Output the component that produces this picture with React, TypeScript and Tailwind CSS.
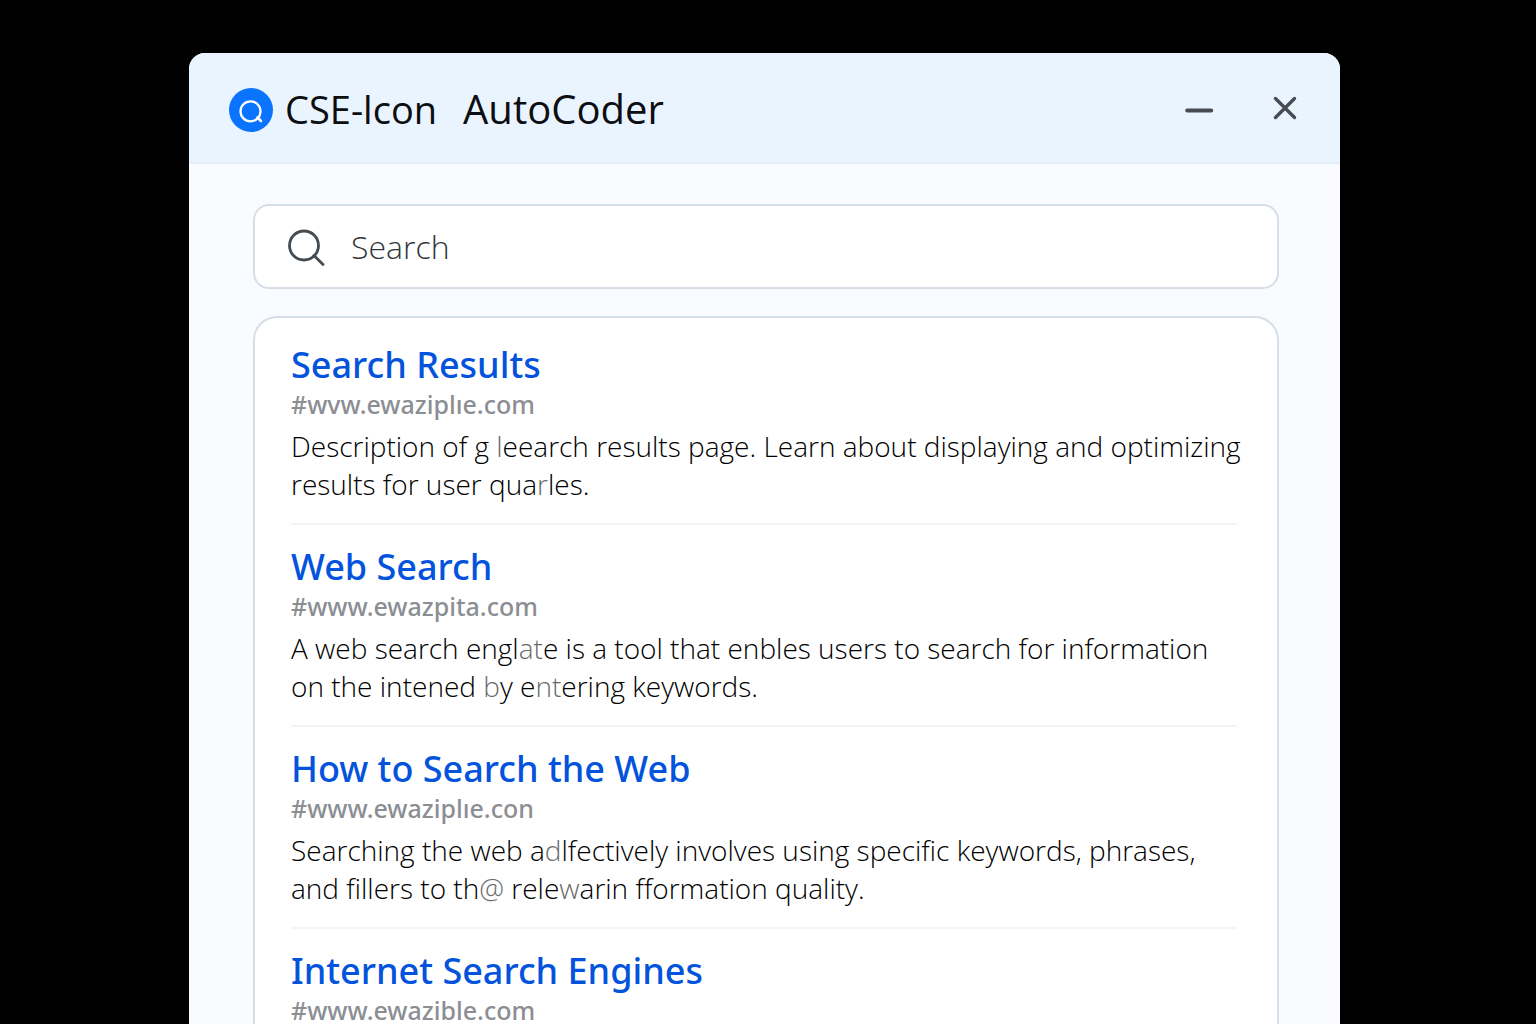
import type { ReactNode } from "react";

type Result = { title: string; url: string; lines?: ReactNode[] };

function Faded({ children }: { children: ReactNode }) {
  return <span className="text-[#6a6a6a]">{children}</span>;
}

const results: Result[] = [
  {
    title: "Search Results",
    url: "#wvw.ewaziplıe.com",
    lines: [
      <>Description of g <Faded>l</Faded>eearch results page. Learn about displaying and optimizing</>,
      <>results for user qua<Faded>r</Faded>les.</>,
    ],
  },
  {
    title: "Web Search",
    url: "#www.ewazpita.com",
    lines: [
      <>A web search engl<Faded>at</Faded>e is a tool that enbles users to search for information</>,
      <>on the intened <Faded>b</Faded>y e<Faded>nt</Faded>ering keywords.</>,
    ],
  },
  {
    title: "How to Search the Web",
    url: "#www.ewaziplıe.con",
    lines: [
      <>Searching the web a<Faded>d</Faded>lfectively involves using specific keywords, phrases,</>,
      <>and fillers to th<Faded>@</Faded> rele<Faded>w</Faded>arin fformation quality.</>,
    ],
  },
  { title: "Internet Search Engines", url: "#www.ewazible.com" },
];

function ResultItem({ title, url, lines }: Result) {
  return (
    <li className="border-b-2 border-[#f1f4f9] py-5 last:border-b-0 last:pb-0">
      <h2 className="font-['Noto_Sans','Open_Sans',sans-serif] text-[36px] leading-[44px] font-medium text-[#0353dc]">
        <a href="#result">{title}</a>
      </h2>
      <p className="pt-1 font-['Noto_Sans','Open_Sans',sans-serif] text-[25px] leading-[26px] font-medium text-[#8b8e93]">{url}</p>
      {lines && (
        <p className="pt-2.5 text-[28px] leading-[38px] font-light text-black">
          {lines.map((line, i) => (
            <span key={i} className="block whitespace-nowrap">{line}</span>
          ))}
        </p>
      )}
    </li>
  );
}

export default function App() {
  return (
    <div className="flex h-screen flex-col overflow-hidden bg-black pt-[53px] pr-[196px] pl-[189px] font-['Open_Sans','Noto_Sans',sans-serif]">
      <main className="flex min-h-0 flex-1 flex-col overflow-hidden rounded-t-2xl bg-[#f9fbff]">
        <header className="flex h-[111px] shrink-0 items-center border-b-2 border-[#e3edfb] bg-[#e9f4ff] px-10">
          <div className="flex items-center gap-3 pt-1">
            <svg className="size-11 shrink-0" viewBox="0 0 44 44" fill="none" aria-hidden="true">
              <circle cx="22" cy="22" r="22" fill="#0b74ff" />
              <circle cx="21.5" cy="23.3" r="10" stroke="#fff" strokeWidth="2.3" />
              <path d="M28.5 29.5 32 33" stroke="#fff" strokeWidth="2.6" strokeLinecap="round" />
            </svg>
            <h1 className="flex items-baseline gap-[26px] pb-0.5 leading-[48px] text-[#0c0e11]">
              <span className="text-[38px]">CSE-lcon</span>
              <span className="text-[40px]">AutoCoder</span>
            </h1>
          </div>
          <div className="ml-auto flex items-center gap-14">
            <button type="button" aria-label="Minimize">
              <svg className="h-8 w-[30px]" viewBox="0 0 30 32" fill="none" stroke="#474c53" strokeWidth="4" strokeLinecap="round">
                <path d="M3.2 18.5H27.2" />
              </svg>
            </button>
            <button type="button" aria-label="Close">
              <svg className="h-8 w-[30px]" viewBox="0 0 30 32" fill="none" stroke="#474c53" strokeWidth="3.4" strokeLinecap="round">
                <path d="M5.5 6.5 24.5 25.5M24.5 6.5 5.5 25.5" />
              </svg>
            </button>
          </div>
        </header>

        <div className="flex min-h-0 flex-1 flex-col gap-[27px] pt-10 pr-[61px] pl-16">
          <label className="flex h-[85px] shrink-0 items-center gap-6 rounded-2xl border-2 border-[#d6dee8] bg-white px-8">
            <svg className="size-10 shrink-0" viewBox="0 0 40 40" fill="none" stroke="#434b54" strokeWidth="2.8" strokeLinecap="round" aria-hidden="true">
              <circle cx="17" cy="18.5" r="14.5" />
              <path d="M27 28.5 36 37.5" />
            </svg>
            <input
              type="text"
              aria-label="Search"
              placeholder="Search"
              className="min-w-0 flex-1 bg-transparent text-[32px] leading-10 font-light text-[#30363c] outline-none placeholder:text-[#30363c]"
            />
          </label>

          <section className="min-h-0 flex-1 overflow-hidden rounded-t-3xl border-2 border-b-0 border-[#d6dee8] bg-white pt-[5px] pr-10 pl-9">
            <ul>
              {results.map((result) => (
                <ResultItem key={result.title} {...result} />
              ))}
            </ul>
          </section>
        </div>
      </main>
    </div>
  );
}
